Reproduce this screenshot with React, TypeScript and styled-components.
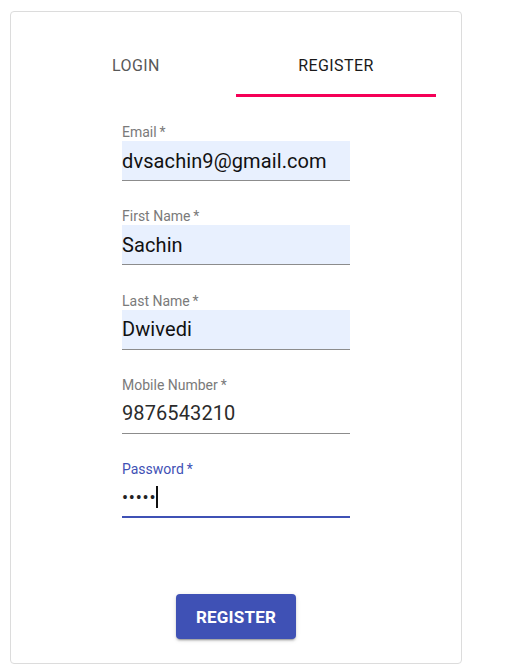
import React from "react";
import styled, { createGlobalStyle } from "styled-components";

const Global = createGlobalStyle`
  html, body { margin: 0; padding: 0; background: #ffffff; }
  body { font-family: Roboto, "Noto Sans", Arial, sans-serif; }
  * { box-sizing: border-box; }
`;

const Page = styled.div`
  padding: 11px 0 0 10px;
  height: 672px;
`;

const Card = styled.div`
  width: 452px;
  height: 653px;
  border: 1px solid #dcdcdc;
  border-radius: 4px;
  background: #fff;
  display: flex;
  flex-direction: column;
  padding: 26px 25px 0 25px;
`;

const Tabs = styled.div`
  display: flex;
  width: 400px;
`;

const Tab = styled.div<{ $active?: boolean }>`
  flex: 1;
  height: 59px;
  display: flex;
  align-items: center;
  justify-content: center;
  padding-bottom: 2px;
  font-size: 16px;
  font-weight: 400;
  letter-spacing: 0.4px;
  color: ${(p) => (p.$active ? "#1a1a1a" : "#585858")};
  border-bottom: 3px solid ${(p) => (p.$active ? "#f50057" : "transparent")};
  text-transform: uppercase;
`;

const Form = styled.div`
  width: 228px;
  margin: 27px auto 0;
  display: flex;
  flex-direction: column;
  gap: 27.25px;
`;

const Field = styled.div`
  display: flex;
  flex-direction: column;
`;

const Label = styled.label<{ $focused?: boolean }>`
  font-size: 14px;
  line-height: 17px;
  height: 17px;
  color: ${(p) => (p.$focused ? "#3f51b5" : "#7a7a7a")};
`;

const InputBox = styled.div<{ $filled?: boolean; $focused?: boolean }>`
  height: 40px;
  display: flex;
  align-items: center;
  background: ${(p) => (p.$filled ? "#e8f0fe" : "transparent")};
  border-bottom: ${(p) => (p.$focused ? "2px solid #3f51b5" : "1px solid #8c8c8c")};
  font-size: 20px;
  color: ${(p) => (p.$filled ? "#111" : "#2b2b2b")};
  letter-spacing: 0.1px;
`;

const Dots = styled.span`
  font-size: 18px;
  letter-spacing: 0.8px;
  color: #222;
`;

const Caret = styled.span`
  display: inline-block;
  width: 2px;
  height: 22px;
  background: #111;
`;

const ButtonRow = styled.div`
  margin-top: 76px;
  display: flex;
  justify-content: center;
`;

const Button = styled.button`
  width: 120px;
  height: 45px;
  border: none;
  border-radius: 4px;
  background: #3f51b5;
  color: #fff;
  font-family: Roboto, Arial, sans-serif;
  font-size: 17px;
  font-weight: 700;
  letter-spacing: 0.2px;
  box-shadow: 0 3px 1px -2px rgba(0,0,0,0.2), 0 2px 2px 0 rgba(0,0,0,0.14), 0 1px 5px 0 rgba(0,0,0,0.12);
`;

const fields = [
  { label: "Email", value: "dvsachin9@gmail.com", filled: true },
  { label: "First Name", value: "Sachin", filled: true },
  { label: "Last Name", value: "Dwivedi", filled: true },
  { label: "Mobile Number", value: "9876543210", filled: false },
];

export default function App() {
  return (
    <Page>
      <Global />
      <Card>
        <Tabs>
          <Tab>Login</Tab>
          <Tab $active>Register</Tab>
        </Tabs>
        <Form>
          {fields.map((f) => (
            <Field key={f.label}>
              <Label>{f.label}&thinsp;*</Label>
              <InputBox $filled={f.filled}>{f.value}</InputBox>
            </Field>
          ))}
          <Field>
            <Label $focused>Password&thinsp;*</Label>
            <InputBox $focused>
              <Dots>•••••</Dots>
              <Caret />
            </InputBox>
          </Field>
        </Form>
        <ButtonRow>
          <Button>REGISTER</Button>
        </ButtonRow>
      </Card>
    </Page>
  );
}
